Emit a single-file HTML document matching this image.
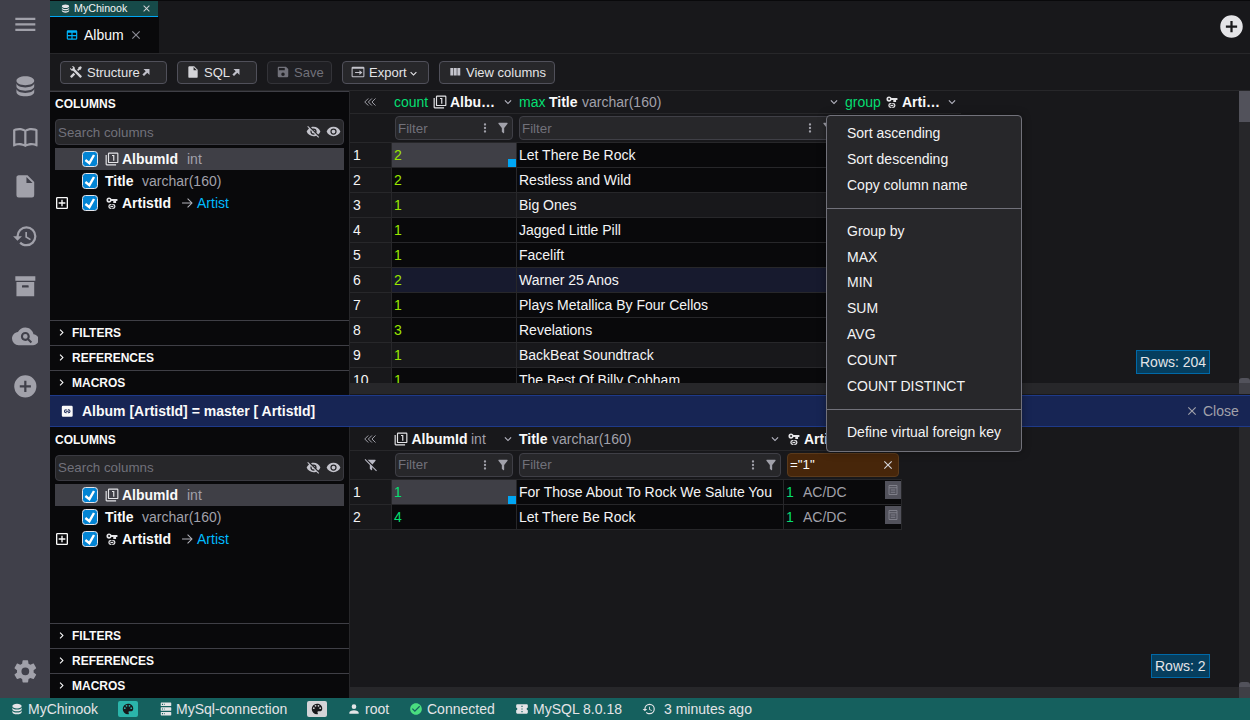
<!DOCTYPE html>
<html lang="en">
<head>
<meta charset="utf-8">
<title>DbGate - Album</title>
<style>
*{box-sizing:border-box;margin:0;padding:0}
html,body{width:1250px;height:720px;overflow:hidden;background:#18181b}
body{position:relative;font-family:"Liberation Sans",Arial,sans-serif;font-size:14px;color:#e4e4e7;line-height:1}
.abs,.ico{position:absolute}
svg{display:block}
.ico{fill:currentColor}
i{display:block;font-style:normal}
#sidebar{left:0;top:0;width:50px;height:698px;background:#40404a;color:#a1a1aa}
#status{left:0;top:698px;width:1250px;height:22px;background:#15605e;color:#e4e4e7;font-size:14px}
#status .t{position:absolute;top:4px;white-space:nowrap}
#tabs{left:50px;top:0;width:1200px;height:53px;background:#18181b;border-top:1px solid #09090b}
#dbtab{left:50px;top:1px;width:108px;height:16px;background:#164a49;border-bottom:1px solid #00a6f4;font-size:10.67px;color:#f4f4f5}
#filetab{left:50px;top:17px;width:109px;height:36px;background:#09090b}
#toolbar{left:50px;top:53px;width:1200px;height:38px;background:#18181b;border-top:1px solid #27272a;border-bottom:1px solid #27272a}
.btn{position:absolute;top:61px;height:23px;background:#27272a;border:1px solid #50505a;border-radius:4px;font-size:13px;color:#e4e4e7;white-space:nowrap}
.btn .t{position:absolute;top:4px}
.btn.dis{color:#71717a;background:#1f1f23;border-color:#333338}
.lp{left:50px;width:299px;background:#09090b}
.lpb{left:349px;width:1px;background:#27272a}
.ttl{position:absolute;left:5px;font-weight:bold;font-size:12px;color:#fafafa}
.search{position:absolute;left:5px;width:289px;height:26px;background:#27272a;border:1px solid #3a3a41;border-radius:4px;font-size:13.333px;color:#71717a}
.search .t{position:absolute;left:2px;top:6px}
.colrow{position:absolute;left:5px;width:289px;height:22px;font-size:14px;white-space:nowrap}
.colrow.sel{background:#3f3f46}
.colrow b,.colrow span{position:absolute;top:4px}
.colrow b{color:#fafafa}
.colrow .ty{color:#a1a1aa}
.colrow .cb{left:27px;top:3px;width:16px;height:16px;border-radius:3.5px;background:#0284d4;border:1px solid #e4e4ea}
.acc{position:absolute;left:50px;width:299px;height:25px;background:#09090b;border-top:1px solid #3f3f46;font-weight:bold;font-size:12px;color:#fafafa}
.acc .t{position:absolute;left:22px;top:6px}
.grid{position:absolute;font-size:14px}
.cell{position:absolute;height:25px;border-right:1px solid #27272a;border-bottom:1px solid #27272a;white-space:nowrap;overflow:hidden;color:#f4f4f5}
.cell .t{position:absolute;left:3px;top:5px}
.hdr{background:#18181b}
.num{color:#9ae600}
.grn{color:#05df72}
.finput{position:absolute;height:24px;background:#27272a;border:1px solid #3f3f46;border-radius:4px;font-size:13.333px;color:#71717a}
.finput .t{position:absolute;left:2px;top:5px}
#menu{left:826px;top:115px;width:196px;height:337px;background:#27272a;border:1px solid #71717a;border-radius:4px;box-shadow:0 0 8px rgba(0,0,0,.35);font-size:14px;color:#f4f4f5}
#menu .mi{position:absolute;left:20px;white-space:nowrap}
#menu .dv{position:absolute;left:0;width:194px;height:1px;background:#71717a}
.badge{position:absolute;height:24px;background:#063e5e;border:1px solid #0069a8;color:#e4e4e7}
.badge span{position:absolute;left:3px;top:4px;white-space:nowrap}
</style>
</head>
<body>
<div id="sidebar" class="abs">
<svg class="ico" style="left:11.67px;top:10.67px;width:26.67px;height:26.67px;color:#a1a1aa" viewBox="0 0 24 24"><path d="M3,6H21V8H3V6M3,11H21V13H3V11M3,16H21V18H3V16Z"/></svg>
<svg class="ico" style="left:11.67px;top:72.67px;width:26.67px;height:26.67px;color:#a1a1aa" viewBox="0 0 24 24"><path d="M12,3C7.58,3 4,4.79 4,7C4,9.21 7.58,11 12,11C16.42,11 20,9.21 20,7C20,4.79 16.42,3 12,3M4,9V12C4,14.21 7.58,16 12,16C16.42,16 20,14.21 20,12V9C20,11.21 16.42,13 12,13C7.58,13 4,11.21 4,9M4,14V17C4,19.21 7.58,21 12,21C16.42,21 20,19.21 20,17V14C20,16.21 16.42,18 12,18C7.58,18 4,16.21 4,14Z"/></svg>
<svg class="ico" style="left:11.67px;top:122.67px;width:26.67px;height:26.67px;color:#a1a1aa" viewBox="0 0 24 24"><path d="M12,21.5C10.65,20.65 8.2,20 6.5,20C4.85,20 3.15,20.3 1.75,21.05C1.65,21.1 1.6,21.1 1.5,21.1C1.25,21.1 1,20.85 1,20.6V6C1.6,5.55 2.25,5.25 3,5C4.11,4.65 5.33,4.5 6.5,4.5C8.45,4.5 10.55,4.9 12,6C13.45,4.9 15.55,4.5 17.5,4.5C18.67,4.5 19.89,4.65 21,5C21.75,5.25 22.4,5.55 23,6V20.6C23,20.85 22.75,21.1 22.5,21.1C22.4,21.1 22.35,21.1 22.25,21.05C20.85,20.3 19.15,20 17.5,20C15.8,20 13.35,20.65 12,21.5M11,7.5C9.64,6.9 7.84,6.5 6.5,6.5C5.3,6.5 4.1,6.65 3,7V18.5C4.1,18.15 5.3,18 6.5,18C7.84,18 9.64,18.4 11,19V7.5M13,19C14.36,18.4 16.16,18 17.5,18C18.7,18 19.9,18.15 21,18.5V7C19.9,6.65 18.7,6.5 17.5,6.5C16.16,6.5 14.36,6.9 13,7.5V19Z"/></svg>
<svg class="ico" style="left:11.67px;top:172.67px;width:26.67px;height:26.67px;color:#a1a1aa" viewBox="0 0 24 24"><path d="M13,9V3.5L18.5,9M6,2C4.89,2 4,2.89 4,4V20A2,2 0 0,0 6,22H18A2,2 0 0,0 20,20V8L14,2H6Z"/></svg>
<svg class="ico" style="left:11.67px;top:222.67px;width:26.67px;height:26.67px;color:#a1a1aa" viewBox="0 0 24 24"><path d="M13.5,8H12V13L16.28,15.54L17,14.33L13.5,12.25V8M13,3A9,9 0 0,0 4,12H1L4.96,16.03L9,12H6A7,7 0 0,1 13,5A7,7 0 0,1 20,12A7,7 0 0,1 13,19C11.07,19 9.32,18.21 8.06,16.94L6.64,18.36C8.27,20 10.5,21 13,21A9,9 0 0,0 22,12A9,9 0 0,0 13,3"/></svg>
<svg class="ico" style="left:11.67px;top:272.67px;width:26.67px;height:26.67px;color:#a1a1aa" viewBox="0 0 24 24"><path d="M3,3H21V7H3V3M4,8H20V21H4V8M9.5,11A0.5,0.5 0 0,0 9,11.5V13H15V11.5A0.5,0.5 0 0,0 14.5,11H9.5Z"/></svg>
<svg class="ico" style="left:11.67px;top:322.67px;width:26.67px;height:26.67px;color:#a1a1aa" viewBox="0 0 24 24"><path fill-rule="evenodd" d="M19.35,10.04C18.67,6.59 15.64,4 12,4C9.11,4 6.6,5.64 5.35,8.04C2.34,8.36 0,10.91 0,14A6,6 0 0,0 6,20H19A5,5 0 0,0 24,15C24,12.36 21.95,10.22 19.35,10.04M16.8,18.2L14.1,15.5C13.5,15.9 12.8,16.1 12,16.1C9.8,16.1 8,14.3 8,12.1C8,9.9 9.8,8.1 12,8.1C14.2,8.1 16,9.9 16,12.1C16,12.9 15.8,13.6 15.4,14.2L18.1,16.9L16.8,18.2M12,10A2.1,2.1 0 0,0 9.9,12.1A2.1,2.1 0 0,0 12,14.2A2.1,2.1 0 0,0 14.1,12.1A2.1,2.1 0 0,0 12,10Z"/></svg>
<svg class="ico" style="left:11.67px;top:372.67px;width:26.67px;height:26.67px;color:#a1a1aa" viewBox="0 0 24 24"><path d="M17,13H13V17H11V13H7V11H11V7H13V11H17M12,2A10,10 0 0,0 2,12A10,10 0 0,0 12,22A10,10 0 0,0 22,12A10,10 0 0,0 12,2Z"/></svg>
<svg class="ico" style="left:11.67px;top:658.2px;width:26.67px;height:26.67px;color:#a1a1aa" viewBox="0 0 24 24"><path d="M12,15.5A3.5,3.5 0 0,1 8.5,12A3.5,3.5 0 0,1 12,8.5A3.5,3.5 0 0,1 15.5,12A3.5,3.5 0 0,1 12,15.5M19.43,12.97C19.47,12.65 19.5,12.33 19.5,12C19.5,11.67 19.47,11.34 19.43,11L21.54,9.37C21.73,9.22 21.78,8.95 21.66,8.73L19.66,5.27C19.54,5.05 19.27,4.96 19.05,5.05L16.56,6.05C16.04,5.66 15.5,5.32 14.87,5.07L14.5,2.42C14.46,2.18 14.25,2 14,2H10C9.75,2 9.54,2.18 9.5,2.42L9.13,5.07C8.5,5.32 7.96,5.66 7.44,6.05L4.95,5.05C4.73,4.96 4.46,5.05 4.34,5.27L2.34,8.73C2.21,8.95 2.27,9.22 2.46,9.37L4.57,11C4.53,11.34 4.5,11.67 4.5,12C4.5,12.33 4.53,12.65 4.57,12.97L2.46,14.63C2.27,14.78 2.21,15.05 2.34,15.27L4.34,18.73C4.46,18.95 4.73,19.03 4.95,18.95L7.44,17.94C7.96,18.34 8.5,18.68 9.13,18.93L9.5,21.58C9.54,21.82 9.75,22 10,22H14C14.25,22 14.46,21.82 14.5,21.58L14.87,18.93C15.5,18.67 16.04,18.34 16.56,17.94L19.05,18.95C19.27,19.03 19.54,18.95 19.66,18.73L21.66,15.27C21.78,15.05 21.73,14.78 21.54,14.63L19.43,12.97Z"/></svg>
</div>
<div id="tabs" class="abs"></div>
<div id="dbtab" class="abs"><svg class="ico" style="left:10px;top:2px;width:11px;height:11px;color:#e4e4e7" viewBox="0 0 24 24"><path d="M12,3C7.58,3 4,4.79 4,7C4,9.21 7.58,11 12,11C16.42,11 20,9.21 20,7C20,4.79 16.42,3 12,3M4,9V12C4,14.21 7.58,16 12,16C16.42,16 20,14.21 20,12V9C20,11.21 16.42,13 12,13C7.58,13 4,11.21 4,9M4,14V17C4,19.21 7.58,21 12,21C16.42,21 20,19.21 20,17V14C20,16.21 16.42,18 12,18C7.58,18 4,16.21 4,14Z"/></svg><span class="abs" style="left:24px;top:2px">MyChinook</span><svg class="ico" style="left:91px;top:2px;width:11px;height:11px;color:#d4d4d8" viewBox="0 0 24 24"><path d="M19,6.41L17.59,5L12,10.59L6.41,5L5,6.41L10.59,12L5,17.59L6.41,19L12,13.41L17.59,19L19,17.59L13.41,12L19,6.41Z"/></svg></div>
<div id="filetab" class="abs"><svg class="ico" style="left:15px;top:10.6px;width:14px;height:14px;color:#00b4fa" viewBox="0 0 24 24"><path d="M5,4H19A2,2 0 0,1 21,6V18A2,2 0 0,1 19,20H5A2,2 0 0,1 3,18V6A2,2 0 0,1 5,4M5,8V12H11V8H5M13,8V12H19V8H13M5,14V18H11V14H5M13,14V18H19V14H13Z"/></svg><span class="abs" style="left:34px;top:11px;color:#fafafa">Album</span><svg class="ico" style="left:79px;top:11px;width:14px;height:14px;color:#8a8a94" viewBox="0 0 24 24"><path d="M19,6.41L17.59,5L12,10.59L6.41,5L5,6.41L10.59,12L5,17.59L6.41,19L12,13.41L17.59,19L19,17.59L13.41,12L19,6.41Z"/></svg></div>
<svg class="ico" style="left:1218px;top:12.5px;width:27px;height:27px;color:#e4e4e7" viewBox="0 0 24 24"><path d="M17,13H13V17H11V13H7V11H11V7H13V11H17M12,2A10,10 0 0,0 2,12A10,10 0 0,0 12,22A10,10 0 0,0 22,12A10,10 0 0,0 12,2Z"/></svg>
<div id="toolbar" class="abs"></div>
<div class="btn" style="left:60px;width:107px"><svg class="ico" style="left:7.5px;top:3.4px;width:14px;height:14px;color:#d4d4d8" viewBox="0 0 24 24"><path d="M21.71,20.29L20.29,21.71A1,1 0 0,1 18.88,21.71L7,9.85A3.81,3.81 0 0,1 6,10A4,4 0 0,1 2.22,4.7L4.76,7.24L5.29,6.71L6.71,5.29L7.24,4.76L4.7,2.22A4,4 0 0,1 10,6A3.81,3.81 0 0,1 9.85,7L21.71,18.88A1,1 0 0,1 21.71,20.29M2.29,18.88A1,1 0 0,0 2.29,20.29L3.71,21.71A1,1 0 0,0 5.12,21.71L10.59,16.25L7.76,13.42M20,2L16,4V6L13.83,8.17L15.83,10.17L18,8H20L22,4L20,2Z"/></svg><span class="t" style="left:26px">Structure</span><svg class="ico" style="left:79px;top:3.9px;width:12px;height:12px;color:#c0c0ca" viewBox="0 0 24 24"><path d="M7,6H19V18L14.6,13.6L8,20.2L4.8,17L11.4,10.4L7,6Z"/></svg></div>
<div class="btn" style="left:177px;width:80px"><svg class="ico" style="left:8px;top:3.4px;width:14px;height:14px;color:#d4d4d8" viewBox="0 0 24 24"><path d="M13,9V3.5L18.5,9M6,2C4.89,2 4,2.89 4,4V20A2,2 0 0,0 6,22H18A2,2 0 0,0 20,20V8L14,2H6Z"/></svg><span class="t" style="left:26px">SQL</span><svg class="ico" style="left:52.3px;top:3.9px;width:12px;height:12px;color:#c0c0ca" viewBox="0 0 24 24"><path d="M7,6H19V18L14.6,13.6L8,20.2L4.8,17L11.4,10.4L7,6Z"/></svg></div>
<div class="btn dis" style="left:267px;width:65px"><svg class="ico" style="left:8px;top:3.2px;width:14px;height:14px;color:#71717a" viewBox="0 0 24 24"><path d="M15,9H5V5H15M12,19A3,3 0 0,1 9,16A3,3 0 0,1 12,13A3,3 0 0,1 15,16A3,3 0 0,1 12,19M17,3H5C3.89,3 3,3.9 3,5V19A2,2 0 0,0 5,21H19A2,2 0 0,0 21,19V7L17,3Z"/></svg><span class="t" style="left:26px">Save</span></div>
<div class="btn" style="left:342px;width:87px"><svg class="ico" style="left:8px;top:3.2px;width:14px;height:14px;color:#c4c4cc" viewBox="0 0 24 24"><path fill-rule="evenodd" d="M3,3H21A2,2 0 0,1 23,5V19A2,2 0 0,1 21,21H3A2,2 0 0,1 1,19V5A2,2 0 0,1 3,3M2.8,6.5V19.2H21.2V6.5H2.8M14.5,9L19.5,13L14.5,17V13.9H7V12.1H14.5V9Z"/></svg><span class="t" style="left:26px">Export</span><svg class="ico" style="left:63.5px;top:4.5px;width:13px;height:13px;color:#e4e4e7" viewBox="0 0 24 24"><path d="M7.41,8.58L12,13.17L16.59,8.58L18,10L12,16L6,10L7.41,8.58Z"/></svg></div>
<div class="btn" style="left:439px;width:116px"><svg class="ico" style="left:8px;top:2.8px;width:14px;height:14px;color:#c4c4cc" viewBox="0 0 24 24"><path d="M16,5V18H21V5M4,18H9V5H4M10,18H15V5H10V18Z"/></svg><span class="t" style="left:26px">View columns</span></div>
<div class="abs lp" style="top:92px;height:228px"></div>
<div class="abs" style="left:50px;top:98px;width:299px;height:120px">
<span class="ttl" style="top:0">COLUMNS</span>
<div class="search" style="top:21px"><span class="t" style="top:6px">Search columns</span><svg class="ico" style="left:249.5px;top:4.3px;width:15px;height:15px;color:#c4c4cc" viewBox="0 0 24 24"><path d="M11.83,9L15,12.16C15,12.11 15,12.05 15,12A3,3 0 0,0 12,9C11.94,9 11.89,9 11.83,9M7.53,9.8L9.08,11.35C9.03,11.56 9,11.77 9,12A3,3 0 0,0 12,15C12.22,15 12.44,14.97 12.65,14.92L14.2,16.47C13.53,16.8 12.79,17 12,17A5,5 0 0,1 7,12C7,11.21 7.2,10.47 7.53,9.8M2,4.27L4.28,6.55L4.73,7C3.08,8.3 1.78,10 1,12C2.73,16.39 7,19.5 12,19.5C13.55,19.5 15.03,19.2 16.38,18.66L16.81,19.08L19.73,22L21,20.73L3.27,3M12,7A5,5 0 0,1 17,12C17,12.64 16.87,13.26 16.64,13.82L19.57,16.75C21.07,15.5 22.27,13.86 23,12C21.27,7.61 17,4.5 12,4.5C10.6,4.5 9.26,4.75 8,5.2L10.17,7.35C10.74,7.13 11.35,7 12,7Z"/></svg><svg class="ico" style="left:270px;top:4.3px;width:15px;height:15px;color:#c4c4cc" viewBox="0 0 24 24"><path d="M12,9A3,3 0 0,0 9,12A3,3 0 0,0 12,15A3,3 0 0,0 15,12A3,3 0 0,0 12,9M12,17A5,5 0 0,1 7,12A5,5 0 0,1 12,7A5,5 0 0,1 17,12A5,5 0 0,1 12,17M12,4.5C7,4.5 2.73,7.61 1,12C2.73,16.39 7,19.5 12,19.5C17,19.5 21.27,16.39 23,12C21.27,7.61 17,4.5 12,4.5Z"/></svg></div>
<div class="colrow sel" style="top:50px"><i class="abs cb"><svg viewBox="0 0 16 16" style="position:absolute;left:-1px;top:-1px;width:16px;height:16px"><path d="M3.4,9L7.4,12.2L12,4" fill="none" stroke="#fff" stroke-width="2.4"/></svg></i><svg class="ico" style="left:49.5px;top:3.6px;width:14px;height:14px;color:#e4e4e7" viewBox="0 0 24 24"><path d="M3,5V21H19V23H3A2,2 0 0,1 1,21V5H3M14,15H16V5H12V7H14V15M21,1A2,2 0 0,1 23,3V17A2,2 0 0,1 21,19H7A2,2 0 0,1 5,17V3A2,2 0 0,1 7,1H21M21,3H7V17H21V3Z"/></svg><b style="left:67px">AlbumId</b><span class="ty" style="left:132px">int</span></div>
<div class="colrow" style="top:72px"><i class="abs cb"><svg viewBox="0 0 16 16" style="position:absolute;left:-1px;top:-1px;width:16px;height:16px"><path d="M3.4,9L7.4,12.2L12,4" fill="none" stroke="#fff" stroke-width="2.4"/></svg></i><b style="left:50px">Title</b><span class="ty" style="left:87px">varchar(160)</span></div>
<div class="colrow" style="top:94px"><svg class="ico" style="left:1px;top:5px;width:12px;height:12px;color:#fafafa" viewBox="3 3 18 18"><path d="M19,19V5H5V19H19M19,3A2,2 0 0,1 21,5V19A2,2 0 0,1 19,21H5A2,2 0 0,1 3,19V5C3,3.89 3.9,3 5,3H19M11,7H13V11H17V13H13V17H11V13H7V11H11V7Z"/></svg><i class="abs cb"><svg viewBox="0 0 16 16" style="position:absolute;left:-1px;top:-1px;width:16px;height:16px"><path d="M3.4,9L7.4,12.2L12,4" fill="none" stroke="#fff" stroke-width="2.4"/></svg></i><svg class="ico" style="left:49.5px;top:4px;width:14px;height:14px;color:#e4e4e7" viewBox="0 0 24 24"><path fill-rule="evenodd" d="M7,2.5A4.5,4.5 0 0,1 11.2,5.3H21.3V8.7H19V12H14.2V8.7H11.2A4.5,4.5 0 0,1 7,11.5A4.5,4.5 0 0,1 2.5,7A4.5,4.5 0 0,1 7,2.5M7,5.3A1.7,1.7 0 0,0 5.3,7A1.7,1.7 0 0,0 7,8.7A1.7,1.7 0 0,0 8.7,7A1.7,1.7 0 0,0 7,5.3Z"/><path d="M9.8,13.8H11.1V16H9.8A2,2 0 0,0 9.8,20H11.1V22.2H9.8A4.2,4.2 0 0,1 9.8,13.8M12.5,13.8H13.8A4.2,4.2 0 0,1 13.8,22.2H12.5V20H13.8A2,2 0 0,0 13.8,16H12.5V13.8M9.3,17H14.3V19H9.3V17Z"/></svg><b style="left:67px">ArtistId</b><svg class="ico" style="left:125px;top:4px;width:14px;height:14px;color:#b4b4bc" viewBox="0 0 24 24"><path d="M3.5,12H20M13,4.5L20.5,12L13,19.5" fill="none" stroke="currentColor" stroke-width="1.8"/></svg><span style="left:142px;color:#00bcff">Artist</span></div>
</div>
<div class="acc" style="top:320px"><svg class="ico" style="left:5px;top:5px;width:13px;height:13px;color:#fafafa" viewBox="0 0 24 24"><path d="M8.59,16.58L13.17,12L8.59,7.41L10,6L16,12L10,18L8.59,16.58Z"/></svg><span class="t">FILTERS</span></div>
<div class="acc" style="top:345px"><svg class="ico" style="left:5px;top:5px;width:13px;height:13px;color:#fafafa" viewBox="0 0 24 24"><path d="M8.59,16.58L13.17,12L8.59,7.41L10,6L16,12L10,18L8.59,16.58Z"/></svg><span class="t">REFERENCES</span></div>
<div class="acc" style="top:370px"><svg class="ico" style="left:5px;top:5px;width:13px;height:13px;color:#fafafa" viewBox="0 0 24 24"><path d="M8.59,16.58L13.17,12L8.59,7.41L10,6L16,12L10,18L8.59,16.58Z"/></svg><span class="t">MACROS</span></div>
<div class="abs" style="left:50px;top:91px;width:299px;height:1px;background:#3f3f46"></div>
<div class="abs lpb" style="top:91px;height:304px"></div>
<div class="grid" style="left:350px;top:91px;width:889px;height:292px;background:#18181b;overflow:hidden">
<div class="abs hdr" style="left:0;top:0;width:611px;height:23px;border-bottom:1px solid #27272a"></div>
<svg class="ico" style="left:13px;top:4px;width:14px;height:14px;color:#a1a1aa" viewBox="0 0 24 24"><path d="M9,6L3,12L9,18M15.2,6L9.2,12L15.2,18M21.4,6L15.4,12L21.4,18" fill="none" stroke="currentColor" stroke-width="1.7"/></svg>
<span class="abs grn" style="left:44px;top:4px">count</span><svg class="ico" style="left:83px;top:4px;width:14px;height:14px;color:#e4e4e7" viewBox="0 0 24 24"><path d="M3,5V21H19V23H3A2,2 0 0,1 1,21V5H3M14,15H16V5H12V7H14V15M21,1A2,2 0 0,1 23,3V17A2,2 0 0,1 21,19H7A2,2 0 0,1 5,17V3A2,2 0 0,1 7,1H21M21,3H7V17H21V3Z"/></svg><b class="abs" style="left:100px;top:4px;color:#fafafa">Albu…</b><svg class="ico" style="left:151px;top:4px;width:14px;height:14px;color:#b4b4c0" viewBox="0 0 24 24"><path d="M7.41,8.58L12,13.17L16.59,8.58L18,10L12,16L6,10L7.41,8.58Z"/></svg>
<span class="abs grn" style="left:169px;top:4px">max</span><b class="abs" style="left:199px;top:4px;color:#fafafa">Title</b><span class="abs" style="left:232px;top:4px;color:#a1a1aa">varchar(160)</span><svg class="ico" style="left:476.5px;top:4px;width:14px;height:14px;color:#b4b4c0" viewBox="0 0 24 24"><path d="M7.41,8.58L12,13.17L16.59,8.58L18,10L12,16L6,10L7.41,8.58Z"/></svg>
<span class="abs grn" style="left:495px;top:4px">group</span><svg class="ico" style="left:535px;top:4px;width:14px;height:14px;color:#e4e4e7" viewBox="0 0 24 24"><path fill-rule="evenodd" d="M7,2.5A4.5,4.5 0 0,1 11.2,5.3H21.3V8.7H19V12H14.2V8.7H11.2A4.5,4.5 0 0,1 7,11.5A4.5,4.5 0 0,1 2.5,7A4.5,4.5 0 0,1 7,2.5M7,5.3A1.7,1.7 0 0,0 5.3,7A1.7,1.7 0 0,0 7,8.7A1.7,1.7 0 0,0 8.7,7A1.7,1.7 0 0,0 7,5.3Z"/><path d="M9.8,13.8H11.1V16H9.8A2,2 0 0,0 9.8,20H11.1V22.2H9.8A4.2,4.2 0 0,1 9.8,13.8M12.5,13.8H13.8A4.2,4.2 0 0,1 13.8,22.2H12.5V20H13.8A2,2 0 0,0 13.8,16H12.5V13.8M9.3,17H14.3V19H9.3V17Z"/></svg><b class="abs" style="left:552px;top:4px;color:#fafafa">Arti…</b><svg class="ico" style="left:595px;top:4px;width:14px;height:14px;color:#b4b4c0" viewBox="0 0 24 24"><path d="M7.41,8.58L12,13.17L16.59,8.58L18,10L12,16L6,10L7.41,8.58Z"/></svg>
<div class="abs hdr" style="left:0;top:23px;width:611px;height:29px;border-bottom:1px solid #27272a"></div>
<div class="finput" style="left:45px;top:25px;width:118px"><span class="t" style="top:5px">Filter</span><svg class="ico" style="left:82px;top:4px;width:14px;height:14px;color:#a1a1aa" viewBox="0 0 24 24"><path d="M12,16A2,2 0 0,1 14,18A2,2 0 0,1 12,20A2,2 0 0,1 10,18A2,2 0 0,1 12,16M12,10A2,2 0 0,1 14,12A2,2 0 0,1 12,14A2,2 0 0,1 10,12A2,2 0 0,1 12,10M12,4A2,2 0 0,1 14,6A2,2 0 0,1 12,8A2,2 0 0,1 10,6A2,2 0 0,1 12,4Z"/></svg><svg class="ico" style="left:99.5px;top:4px;width:14px;height:14px;color:#a1a1aa" viewBox="0 0 24 24"><path d="M14,12V19.88C14.04,20.18 13.94,20.5 13.71,20.71C13.32,21.1 12.69,21.1 12.3,20.71L10.29,18.7C10.06,18.47 9.96,18.16 10,17.87V12H9.97L4.21,4.62C3.87,4.19 3.95,3.56 4.38,3.22C4.57,3.08 4.78,3 5,3V3H19V3C19.22,3 19.43,3.08 19.62,3.22C20.05,3.56 20.13,4.19 19.79,4.62L14.03,12H14Z"/></svg></div>
<div class="finput" style="left:169px;top:25px;width:319px"><span class="t" style="top:5px">Filter</span><svg class="ico" style="left:283px;top:4px;width:14px;height:14px;color:#a1a1aa" viewBox="0 0 24 24"><path d="M12,16A2,2 0 0,1 14,18A2,2 0 0,1 12,20A2,2 0 0,1 10,18A2,2 0 0,1 12,16M12,10A2,2 0 0,1 14,12A2,2 0 0,1 12,14A2,2 0 0,1 10,12A2,2 0 0,1 12,10M12,4A2,2 0 0,1 14,6A2,2 0 0,1 12,8A2,2 0 0,1 10,6A2,2 0 0,1 12,4Z"/></svg><svg class="ico" style="left:300.5px;top:4px;width:14px;height:14px;color:#a1a1aa" viewBox="0 0 24 24"><path d="M14,12V19.88C14.04,20.18 13.94,20.5 13.71,20.71C13.32,21.1 12.69,21.1 12.3,20.71L10.29,18.7C10.06,18.47 9.96,18.16 10,17.87V12H9.97L4.21,4.62C3.87,4.19 3.95,3.56 4.38,3.22C4.57,3.08 4.78,3 5,3V3H19V3C19.22,3 19.43,3.08 19.62,3.22C20.05,3.56 20.13,4.19 19.79,4.62L14.03,12H14Z"/></svg></div>
<div class="finput" style="left:495px;top:25px;width:112px"><span class="t" style="top:5px">Filter</span><svg class="ico" style="left:76px;top:4px;width:14px;height:14px;color:#a1a1aa" viewBox="0 0 24 24"><path d="M12,16A2,2 0 0,1 14,18A2,2 0 0,1 12,20A2,2 0 0,1 10,18A2,2 0 0,1 12,16M12,10A2,2 0 0,1 14,12A2,2 0 0,1 12,14A2,2 0 0,1 10,12A2,2 0 0,1 12,10M12,4A2,2 0 0,1 14,6A2,2 0 0,1 12,8A2,2 0 0,1 10,6A2,2 0 0,1 12,4Z"/></svg><svg class="ico" style="left:93.5px;top:4px;width:14px;height:14px;color:#a1a1aa" viewBox="0 0 24 24"><path d="M14,12V19.88C14.04,20.18 13.94,20.5 13.71,20.71C13.32,21.1 12.69,21.1 12.3,20.71L10.29,18.7C10.06,18.47 9.96,18.16 10,17.87V12H9.97L4.21,4.62C3.87,4.19 3.95,3.56 4.38,3.22C4.57,3.08 4.78,3 5,3V3H19V3C19.22,3 19.43,3.08 19.62,3.22C20.05,3.56 20.13,4.19 19.79,4.62L14.03,12H14Z"/></svg></div>
<div class="cell hdr" style="left:0;top:52px;width:42px"><span class="t">1</span></div>
<div class="cell" style="left:42px;top:52px;width:125px;background:#3f3f46"><span class="t num" style="left:2px">2</span><i class="abs" style="right:0;bottom:0;width:8px;height:8px;background:#00a6f4"></i></div>
<div class="cell" style="left:167px;top:52px;width:325px;background:#09090b"><span class="t" style="left:2px">Let There Be Rock</span></div>
<div class="cell" style="left:492px;top:52px;width:119px;background:#09090b"></div>
<div class="cell hdr" style="left:0;top:77px;width:42px"><span class="t">2</span></div>
<div class="cell" style="left:42px;top:77px;width:125px;background:#09090b"><span class="t num" style="left:2px">2</span></div>
<div class="cell" style="left:167px;top:77px;width:325px;background:#09090b"><span class="t" style="left:2px">Restless and Wild</span></div>
<div class="cell" style="left:492px;top:77px;width:119px;background:#09090b"></div>
<div class="cell hdr" style="left:0;top:102px;width:42px"><span class="t">3</span></div>
<div class="cell" style="left:42px;top:102px;width:125px;background:#18181b"><span class="t num" style="left:2px">1</span></div>
<div class="cell" style="left:167px;top:102px;width:325px;background:#18181b"><span class="t" style="left:2px">Big Ones</span></div>
<div class="cell" style="left:492px;top:102px;width:119px;background:#18181b"></div>
<div class="cell hdr" style="left:0;top:127px;width:42px"><span class="t">4</span></div>
<div class="cell" style="left:42px;top:127px;width:125px;background:#09090b"><span class="t num" style="left:2px">1</span></div>
<div class="cell" style="left:167px;top:127px;width:325px;background:#09090b"><span class="t" style="left:2px">Jagged Little Pill</span></div>
<div class="cell" style="left:492px;top:127px;width:119px;background:#09090b"></div>
<div class="cell hdr" style="left:0;top:152px;width:42px"><span class="t">5</span></div>
<div class="cell" style="left:42px;top:152px;width:125px;background:#09090b"><span class="t num" style="left:2px">1</span></div>
<div class="cell" style="left:167px;top:152px;width:325px;background:#09090b"><span class="t" style="left:2px">Facelift</span></div>
<div class="cell" style="left:492px;top:152px;width:119px;background:#09090b"></div>
<div class="cell hdr" style="left:0;top:177px;width:42px"><span class="t">6</span></div>
<div class="cell" style="left:42px;top:177px;width:125px;background:#171a2e"><span class="t num" style="left:2px">2</span></div>
<div class="cell" style="left:167px;top:177px;width:325px;background:#171a2e"><span class="t" style="left:2px">Warner 25 Anos</span></div>
<div class="cell" style="left:492px;top:177px;width:119px;background:#171a2e"></div>
<div class="cell hdr" style="left:0;top:202px;width:42px"><span class="t">7</span></div>
<div class="cell" style="left:42px;top:202px;width:125px;background:#09090b"><span class="t num" style="left:2px">1</span></div>
<div class="cell" style="left:167px;top:202px;width:325px;background:#09090b"><span class="t" style="left:2px">Plays Metallica By Four Cellos</span></div>
<div class="cell" style="left:492px;top:202px;width:119px;background:#09090b"></div>
<div class="cell hdr" style="left:0;top:227px;width:42px"><span class="t">8</span></div>
<div class="cell" style="left:42px;top:227px;width:125px;background:#09090b"><span class="t num" style="left:2px">3</span></div>
<div class="cell" style="left:167px;top:227px;width:325px;background:#09090b"><span class="t" style="left:2px">Revelations</span></div>
<div class="cell" style="left:492px;top:227px;width:119px;background:#09090b"></div>
<div class="cell hdr" style="left:0;top:252px;width:42px"><span class="t">9</span></div>
<div class="cell" style="left:42px;top:252px;width:125px;background:#18181b"><span class="t num" style="left:2px">1</span></div>
<div class="cell" style="left:167px;top:252px;width:325px;background:#18181b"><span class="t" style="left:2px">BackBeat Soundtrack</span></div>
<div class="cell" style="left:492px;top:252px;width:119px;background:#18181b"></div>
<div class="cell hdr" style="left:0;top:277px;width:42px"><span class="t">10</span></div>
<div class="cell" style="left:42px;top:277px;width:125px;background:#09090b"><span class="t num" style="left:2px">1</span></div>
<div class="cell" style="left:167px;top:277px;width:325px;background:#09090b"><span class="t" style="left:2px">The Best Of Billy Cobham</span></div>
<div class="cell" style="left:492px;top:277px;width:119px;background:#09090b"></div>
</div>
<div class="abs" style="left:350px;top:383px;width:889px;height:11px;background:#27272a"></div>
<div class="abs" style="left:1239px;top:91px;width:11px;height:303px;background:#27272a"></div>
<div class="abs" style="left:1239px;top:91px;width:11px;height:31px;background:#52525b"></div>
<div class="abs" style="left:1239px;top:378px;width:11px;height:5px;background:#52525b;border-radius:3px 3px 0 0"></div>
<div class="abs" style="left:1239px;top:383px;width:11px;height:11px;background:#3f3f46"></div>
<div class="badge" style="left:1136px;top:350px;width:74px"><span>Rows: 204</span></div>
<div class="abs" style="left:50px;top:395px;width:1200px;height:32px;background:#172554;border-top:1px solid #1e3a8a;border-bottom:1px solid #1e3a8a"><svg class="ico" style="left:10px;top:7.5px;width:14.5px;height:14.5px;color:#fafafa" viewBox="0 0 24 24"><path fill-rule="evenodd" d="M19,3A2,2 0 0,1 21,5V19A2,2 0 0,1 19,21H5A2,2 0 0,1 3,19V5A2,2 0 0,1 5,3H19M10,8.6A3.4,3.4 0 0,0 10,15.4H11V13.8H10A1.8,1.8 0 0,1 10,10.2H11V8.6H10M13,8.6V10.2H14A1.8,1.8 0 0,1 14,13.8H13V15.4H14A3.400,3.400 0 0,0 14,8.6H13M9.5,11.2V12.8H14.5V11.2H9.5Z"/></svg><b class="abs" style="left:32px;top:8px;color:#fafafa;white-space:nowrap">Album [ArtistId] = master [ ArtistId]</b><svg class="ico" style="left:1135px;top:8px;width:14px;height:14px;color:#a1a1aa" viewBox="0 0 24 24"><path d="M19,6.41L17.59,5L12,10.59L6.41,5L5,6.41L10.59,12L5,17.59L6.41,19L12,13.41L17.59,19L19,17.59L13.41,12L19,6.41Z"/></svg><span class="abs" style="left:1153px;top:8px;color:#a1a1aa">Close</span></div>
<div class="abs lp" style="top:427px;height:196px"></div>
<div class="abs" style="left:50px;top:434px;width:299px;height:120px">
<span class="ttl" style="top:0">COLUMNS</span>
<div class="search" style="top:21px"><span class="t" style="top:5px">Search columns</span><svg class="ico" style="left:249.5px;top:4.3px;width:15px;height:15px;color:#c4c4cc" viewBox="0 0 24 24"><path d="M11.83,9L15,12.16C15,12.11 15,12.05 15,12A3,3 0 0,0 12,9C11.94,9 11.89,9 11.83,9M7.53,9.8L9.08,11.35C9.03,11.56 9,11.77 9,12A3,3 0 0,0 12,15C12.22,15 12.44,14.97 12.65,14.92L14.2,16.47C13.53,16.8 12.79,17 12,17A5,5 0 0,1 7,12C7,11.21 7.2,10.47 7.53,9.8M2,4.27L4.28,6.55L4.73,7C3.08,8.3 1.78,10 1,12C2.73,16.39 7,19.5 12,19.5C13.55,19.5 15.03,19.2 16.38,18.66L16.81,19.08L19.73,22L21,20.73L3.27,3M12,7A5,5 0 0,1 17,12C17,12.64 16.87,13.26 16.64,13.82L19.57,16.75C21.07,15.5 22.27,13.86 23,12C21.27,7.61 17,4.5 12,4.5C10.6,4.5 9.26,4.75 8,5.2L10.17,7.35C10.74,7.13 11.35,7 12,7Z"/></svg><svg class="ico" style="left:270px;top:4.3px;width:15px;height:15px;color:#c4c4cc" viewBox="0 0 24 24"><path d="M12,9A3,3 0 0,0 9,12A3,3 0 0,0 12,15A3,3 0 0,0 15,12A3,3 0 0,0 12,9M12,17A5,5 0 0,1 7,12A5,5 0 0,1 12,7A5,5 0 0,1 17,12A5,5 0 0,1 12,17M12,4.5C7,4.5 2.73,7.61 1,12C2.73,16.39 7,19.5 12,19.5C17,19.5 21.27,16.39 23,12C21.27,7.61 17,4.5 12,4.5Z"/></svg></div>
<div class="colrow sel" style="top:50px"><i class="abs cb"><svg viewBox="0 0 16 16" style="position:absolute;left:-1px;top:-1px;width:16px;height:16px"><path d="M3.4,9L7.4,12.2L12,4" fill="none" stroke="#fff" stroke-width="2.4"/></svg></i><svg class="ico" style="left:49.5px;top:3.6px;width:14px;height:14px;color:#e4e4e7" viewBox="0 0 24 24"><path d="M3,5V21H19V23H3A2,2 0 0,1 1,21V5H3M14,15H16V5H12V7H14V15M21,1A2,2 0 0,1 23,3V17A2,2 0 0,1 21,19H7A2,2 0 0,1 5,17V3A2,2 0 0,1 7,1H21M21,3H7V17H21V3Z"/></svg><b style="left:67px">AlbumId</b><span class="ty" style="left:132px">int</span></div>
<div class="colrow" style="top:72px"><i class="abs cb"><svg viewBox="0 0 16 16" style="position:absolute;left:-1px;top:-1px;width:16px;height:16px"><path d="M3.4,9L7.4,12.2L12,4" fill="none" stroke="#fff" stroke-width="2.4"/></svg></i><b style="left:50px">Title</b><span class="ty" style="left:87px">varchar(160)</span></div>
<div class="colrow" style="top:94px"><svg class="ico" style="left:1px;top:5px;width:12px;height:12px;color:#fafafa" viewBox="3 3 18 18"><path d="M19,19V5H5V19H19M19,3A2,2 0 0,1 21,5V19A2,2 0 0,1 19,21H5A2,2 0 0,1 3,19V5C3,3.89 3.9,3 5,3H19M11,7H13V11H17V13H13V17H11V13H7V11H11V7Z"/></svg><i class="abs cb"><svg viewBox="0 0 16 16" style="position:absolute;left:-1px;top:-1px;width:16px;height:16px"><path d="M3.4,9L7.4,12.2L12,4" fill="none" stroke="#fff" stroke-width="2.4"/></svg></i><svg class="ico" style="left:49.5px;top:4px;width:14px;height:14px;color:#e4e4e7" viewBox="0 0 24 24"><path fill-rule="evenodd" d="M7,2.5A4.5,4.5 0 0,1 11.2,5.3H21.3V8.7H19V12H14.2V8.7H11.2A4.5,4.5 0 0,1 7,11.5A4.5,4.5 0 0,1 2.5,7A4.5,4.5 0 0,1 7,2.5M7,5.3A1.7,1.7 0 0,0 5.3,7A1.7,1.7 0 0,0 7,8.7A1.7,1.7 0 0,0 8.7,7A1.7,1.7 0 0,0 7,5.3Z"/><path d="M9.8,13.8H11.1V16H9.8A2,2 0 0,0 9.8,20H11.1V22.2H9.8A4.2,4.2 0 0,1 9.8,13.8M12.5,13.8H13.8A4.2,4.2 0 0,1 13.8,22.2H12.5V20H13.8A2,2 0 0,0 13.8,16H12.5V13.8M9.3,17H14.3V19H9.3V17Z"/></svg><b style="left:67px">ArtistId</b><svg class="ico" style="left:125px;top:4px;width:14px;height:14px;color:#b4b4bc" viewBox="0 0 24 24"><path d="M3.5,12H20M13,4.5L20.5,12L13,19.5" fill="none" stroke="currentColor" stroke-width="1.8"/></svg><span style="left:142px;color:#00bcff">Artist</span></div>
</div>
<div class="acc" style="top:623px"><svg class="ico" style="left:5px;top:5px;width:13px;height:13px;color:#fafafa" viewBox="0 0 24 24"><path d="M8.59,16.58L13.17,12L8.59,7.41L10,6L16,12L10,18L8.59,16.58Z"/></svg><span class="t">FILTERS</span></div>
<div class="acc" style="top:648px"><svg class="ico" style="left:5px;top:5px;width:13px;height:13px;color:#fafafa" viewBox="0 0 24 24"><path d="M8.59,16.58L13.17,12L8.59,7.41L10,6L16,12L10,18L8.59,16.58Z"/></svg><span class="t">REFERENCES</span></div>
<div class="acc" style="top:673px"><svg class="ico" style="left:5px;top:5px;width:13px;height:13px;color:#fafafa" viewBox="0 0 24 24"><path d="M8.59,16.58L13.17,12L8.59,7.41L10,6L16,12L10,18L8.59,16.58Z"/></svg><span class="t">MACROS</span></div>
<div class="abs lpb" style="top:427px;height:271px"></div>
<div class="grid" style="left:350px;top:427px;width:889px;height:260px;background:#18181b;overflow:hidden">
<div class="abs hdr" style="left:0;top:0;width:552px;height:24px;border-bottom:1px solid #27272a"></div>
<svg class="ico" style="left:13px;top:5px;width:14px;height:14px;color:#a1a1aa" viewBox="0 0 24 24"><path d="M9,6L3,12L9,18M15.2,6L9.2,12L15.2,18M21.4,6L15.4,12L21.4,18" fill="none" stroke="currentColor" stroke-width="1.7"/></svg>
<svg class="ico" style="left:44px;top:5px;width:14px;height:14px;color:#e4e4e7" viewBox="0 0 24 24"><path d="M3,5V21H19V23H3A2,2 0 0,1 1,21V5H3M14,15H16V5H12V7H14V15M21,1A2,2 0 0,1 23,3V17A2,2 0 0,1 21,19H7A2,2 0 0,1 5,17V3A2,2 0 0,1 7,1H21M21,3H7V17H21V3Z"/></svg><b class="abs" style="left:61.5px;top:5px;color:#fafafa">AlbumId</b><span class="abs" style="left:121px;top:5px;color:#a1a1aa">int</span><svg class="ico" style="left:151px;top:5px;width:14px;height:14px;color:#b4b4c0" viewBox="0 0 24 24"><path d="M7.41,8.58L12,13.17L16.59,8.58L18,10L12,16L6,10L7.41,8.58Z"/></svg>
<b class="abs" style="left:169px;top:5px;color:#fafafa">Title</b><span class="abs" style="left:202px;top:5px;color:#a1a1aa">varchar(160)</span><svg class="ico" style="left:418px;top:5px;width:14px;height:14px;color:#b4b4c0" viewBox="0 0 24 24"><path d="M7.41,8.58L12,13.17L16.59,8.58L18,10L12,16L6,10L7.41,8.58Z"/></svg>
<svg class="ico" style="left:437px;top:5px;width:14px;height:14px;color:#e4e4e7" viewBox="0 0 24 24"><path fill-rule="evenodd" d="M7,2.5A4.5,4.5 0 0,1 11.2,5.3H21.3V8.7H19V12H14.2V8.7H11.2A4.5,4.5 0 0,1 7,11.5A4.5,4.5 0 0,1 2.5,7A4.5,4.5 0 0,1 7,2.5M7,5.3A1.7,1.7 0 0,0 5.3,7A1.7,1.7 0 0,0 7,8.7A1.7,1.7 0 0,0 8.7,7A1.7,1.7 0 0,0 7,5.3Z"/><path d="M9.8,13.8H11.1V16H9.8A2,2 0 0,0 9.8,20H11.1V22.2H9.8A4.2,4.2 0 0,1 9.8,13.8M12.5,13.8H13.8A4.2,4.2 0 0,1 13.8,22.2H12.5V20H13.8A2,2 0 0,0 13.8,16H12.5V13.8M9.3,17H14.3V19H9.3V17Z"/></svg><b class="abs" style="left:454px;top:5px;color:#fafafa">ArtistId</b>
<div class="abs hdr" style="left:0;top:24px;width:552px;height:29px;border-bottom:1px solid #27272a"></div>
<svg class="ico" style="left:14px;top:30.5px;width:14px;height:14px;color:#b8b8c4" viewBox="0 0 24 24"><path d="M2.39,1.73L1.11,3L9.97,11.86V17.87C9.96,18.16 10.06,18.47 10.29,18.7L12.3,20.71C12.69,21.1 13.32,21.1 13.71,20.71C13.94,20.5 14.04,20.18 14,19.88V15.89L20.84,22.73L22.11,21.46L2.39,1.73M19.79,4.62C20.13,4.19 20.05,3.56 19.62,3.22C19.43,3.08 19.22,3 19,3H6.2L14.5,11.3L19.79,4.62Z"/></svg>
<div class="finput" style="left:45px;top:26px;width:118px"><span class="t" style="top:4px">Filter</span><svg class="ico" style="left:82px;top:4px;width:14px;height:14px;color:#a1a1aa" viewBox="0 0 24 24"><path d="M12,16A2,2 0 0,1 14,18A2,2 0 0,1 12,20A2,2 0 0,1 10,18A2,2 0 0,1 12,16M12,10A2,2 0 0,1 14,12A2,2 0 0,1 12,14A2,2 0 0,1 10,12A2,2 0 0,1 12,10M12,4A2,2 0 0,1 14,6A2,2 0 0,1 12,8A2,2 0 0,1 10,6A2,2 0 0,1 12,4Z"/></svg><svg class="ico" style="left:99.5px;top:4px;width:14px;height:14px;color:#a1a1aa" viewBox="0 0 24 24"><path d="M14,12V19.88C14.04,20.18 13.94,20.5 13.71,20.71C13.32,21.1 12.69,21.1 12.3,20.71L10.29,18.7C10.06,18.47 9.96,18.16 10,17.87V12H9.97L4.21,4.62C3.87,4.19 3.95,3.56 4.38,3.22C4.57,3.08 4.78,3 5,3V3H19V3C19.22,3 19.43,3.08 19.62,3.22C20.05,3.56 20.13,4.19 19.79,4.62L14.03,12H14Z"/></svg></div>
<div class="finput" style="left:169px;top:26px;width:262px"><span class="t" style="top:4px">Filter</span><svg class="ico" style="left:226px;top:4px;width:14px;height:14px;color:#a1a1aa" viewBox="0 0 24 24"><path d="M12,16A2,2 0 0,1 14,18A2,2 0 0,1 12,20A2,2 0 0,1 10,18A2,2 0 0,1 12,16M12,10A2,2 0 0,1 14,12A2,2 0 0,1 12,14A2,2 0 0,1 10,12A2,2 0 0,1 12,10M12,4A2,2 0 0,1 14,6A2,2 0 0,1 12,8A2,2 0 0,1 10,6A2,2 0 0,1 12,4Z"/></svg><svg class="ico" style="left:243.5px;top:4px;width:14px;height:14px;color:#a1a1aa" viewBox="0 0 24 24"><path d="M14,12V19.88C14.04,20.18 13.94,20.5 13.71,20.71C13.32,21.1 12.69,21.1 12.3,20.71L10.29,18.7C10.06,18.47 9.96,18.16 10,17.87V12H9.97L4.21,4.62C3.87,4.19 3.95,3.56 4.38,3.22C4.57,3.08 4.78,3 5,3V3H19V3C19.22,3 19.43,3.08 19.62,3.22C20.05,3.56 20.13,4.19 19.79,4.62L14.03,12H14Z"/></svg></div>
<div class="finput" style="left:437px;top:26px;width:112px;background:#47260a;border-color:#5a3a1c;color:#fafafa"><span class="t" style="top:4px">="1"</span><svg class="ico" style="left:93px;top:4px;width:14px;height:14px;color:#d4d4d8" viewBox="0 0 24 24"><path d="M19,6.41L17.59,5L12,10.59L6.41,5L5,6.41L10.59,12L5,17.59L6.41,19L12,13.41L17.59,19L19,17.59L13.41,12L19,6.41Z"/></svg></div>
<div class="cell hdr" style="left:0;top:53px;width:42px"><span class="t">1</span></div>
<div class="cell" style="left:42px;top:53px;width:125px;background:#3f3f46"><span class="t grn" style="left:2px">1</span><i class="abs" style="right:0;bottom:0;width:8px;height:8px;background:#00a6f4"></i></div>
<div class="cell" style="left:167px;top:53px;width:267px;background:#09090b"><span class="t" style="left:2px">For Those About To Rock We Salute You</span></div>
<div class="cell" style="left:434px;top:53px;width:118px;background:#09090b"><span class="t grn" style="left:2px">1</span><span class="t" style="left:19px;color:#a1a1aa">AC/DC</span><i class="abs" style="right:0;top:1px;width:16px;height:18px;background:#52525c"></i><svg class="ico" style="left:103px;top:4px;width:12px;height:12px;color:#85858f" viewBox="0 0 24 24"><path d="M4,3H20V21H4V3ZM4,7.5H20M7.5,12H16.5M7.5,16.5H16.5" fill="none" stroke="currentColor" stroke-width="1.8"/></svg></div>
<div class="cell hdr" style="left:0;top:78px;width:42px"><span class="t">2</span></div>
<div class="cell" style="left:42px;top:78px;width:125px;background:#09090b"><span class="t grn" style="left:2px">4</span></div>
<div class="cell" style="left:167px;top:78px;width:267px;background:#09090b"><span class="t" style="left:2px">Let There Be Rock</span></div>
<div class="cell" style="left:434px;top:78px;width:118px;background:#09090b"><span class="t grn" style="left:2px">1</span><span class="t" style="left:19px;color:#a1a1aa">AC/DC</span><i class="abs" style="right:0;top:1px;width:16px;height:18px;background:#52525c"></i><svg class="ico" style="left:103px;top:4px;width:12px;height:12px;color:#85858f" viewBox="0 0 24 24"><path d="M4,3H20V21H4V3ZM4,7.5H20M7.5,12H16.5M7.5,16.5H16.5" fill="none" stroke="currentColor" stroke-width="1.8"/></svg></div>
</div>
<div class="abs" style="left:350px;top:687px;width:889px;height:11px;background:#27272a"></div>
<div class="abs" style="left:1239px;top:427px;width:11px;height:271px;background:#27272a"></div>
<div class="abs" style="left:1239px;top:682px;width:11px;height:5px;background:#52525b;border-radius:3px 3px 0 0"></div>
<div class="abs" style="left:1239px;top:687px;width:11px;height:11px;background:#3f3f46"></div>
<div class="badge" style="left:1151px;top:654px;width:59px"><span>Rows: 2</span></div>
<div id="menu" class="abs">
<span class="mi" style="top:10px">Sort ascending</span>
<span class="mi" style="top:36px">Sort descending</span>
<span class="mi" style="top:62px">Copy column name</span>
<span class="mi" style="top:108px">Group by</span>
<span class="mi" style="top:134px">MAX</span>
<span class="mi" style="top:159px">MIN</span>
<span class="mi" style="top:185px">SUM</span>
<span class="mi" style="top:211px">AVG</span>
<span class="mi" style="top:237px">COUNT</span>
<span class="mi" style="top:263px">COUNT DISTINCT</span>
<span class="mi" style="top:309px">Define virtual foreign key</span>
<i class="dv" style="top:92px"></i><i class="dv" style="top:293px"></i></div>
<div id="status" class="abs">
<svg class="ico" style="left:10px;top:4px;width:14px;height:14px;color:#e4e4e7" viewBox="0 0 24 24"><path d="M12,3C7.58,3 4,4.79 4,7C4,9.21 7.58,11 12,11C16.42,11 20,9.21 20,7C20,4.79 16.42,3 12,3M4,9V12C4,14.21 7.58,16 12,16C16.42,16 20,14.21 20,12V9C20,11.21 16.42,13 12,13C7.58,13 4,11.21 4,9M4,14V17C4,19.21 7.58,21 12,21C16.42,21 20,19.21 20,17V14C20,16.21 16.42,18 12,18C7.58,18 4,16.21 4,14Z"/></svg><span class="t" style="left:28px">MyChinook</span>
<i class="abs" style="left:118px;top:3px;width:20px;height:16px;background:#2bb5ab;border-radius:2px"></i><svg class="ico" style="left:121px;top:4px;width:14px;height:14px;color:#18181b" viewBox="0 0 24 24"><path d="M17.5,12A1.5,1.5 0 0,1 16,10.5A1.5,1.5 0 0,1 17.5,9A1.5,1.5 0 0,1 19,10.5A1.5,1.5 0 0,1 17.5,12M14.5,8A1.5,1.5 0 0,1 13,6.5A1.5,1.5 0 0,1 14.5,5A1.5,1.5 0 0,1 16,6.5A1.5,1.5 0 0,1 14.5,8M9.5,8A1.5,1.5 0 0,1 8,6.5A1.5,1.5 0 0,1 9.5,5A1.5,1.5 0 0,1 11,6.5A1.5,1.5 0 0,1 9.5,8M6.5,12A1.5,1.5 0 0,1 5,10.5A1.5,1.5 0 0,1 6.5,9A1.5,1.5 0 0,1 8,10.5A1.5,1.5 0 0,1 6.5,12M12,3A9,9 0 0,0 3,12A9,9 0 0,0 12,21A1.5,1.5 0 0,0 13.5,19.5C13.5,19.11 13.35,18.76 13.11,18.5C12.88,18.23 12.73,17.88 12.73,17.5A1.5,1.5 0 0,1 14.23,16H16A5,5 0 0,0 21,11C21,6.58 16.97,3 12,3Z"/></svg>
<svg class="ico" style="left:159px;top:4px;width:14px;height:14px;color:#e4e4e7" viewBox="0 0 24 24"><path d="M4,1H20A1,1 0 0,1 21,2V6A1,1 0 0,1 20,7H4A1,1 0 0,1 3,6V2A1,1 0 0,1 4,1M4,9H20A1,1 0 0,1 21,10V14A1,1 0 0,1 20,15H4A1,1 0 0,1 3,14V10A1,1 0 0,1 4,9M4,17H20A1,1 0 0,1 21,18V22A1,1 0 0,1 20,23H4A1,1 0 0,1 3,22V18A1,1 0 0,1 4,17M9,5H10V3H9V5M9,13H10V11H9V13M9,21H10V19H9V21M5,3V5H7V3H5M5,11V13H7V11H5M5,19V21H7V19H5Z"/></svg><span class="t" style="left:176px">MySql-connection</span>
<i class="abs" style="left:307px;top:3px;width:20px;height:16px;background:#d4d4d8;border-radius:2px"></i><svg class="ico" style="left:310px;top:4px;width:14px;height:14px;color:#18181b" viewBox="0 0 24 24"><path d="M17.5,12A1.5,1.5 0 0,1 16,10.5A1.5,1.5 0 0,1 17.5,9A1.5,1.5 0 0,1 19,10.5A1.5,1.5 0 0,1 17.5,12M14.5,8A1.5,1.5 0 0,1 13,6.5A1.5,1.5 0 0,1 14.5,5A1.5,1.5 0 0,1 16,6.5A1.5,1.5 0 0,1 14.5,8M9.5,8A1.5,1.5 0 0,1 8,6.5A1.5,1.5 0 0,1 9.5,5A1.5,1.5 0 0,1 11,6.5A1.5,1.5 0 0,1 9.5,8M6.5,12A1.5,1.5 0 0,1 5,10.5A1.5,1.5 0 0,1 6.5,9A1.5,1.5 0 0,1 8,10.5A1.5,1.5 0 0,1 6.5,12M12,3A9,9 0 0,0 3,12A9,9 0 0,0 12,21A1.5,1.5 0 0,0 13.5,19.5C13.5,19.11 13.35,18.76 13.11,18.5C12.88,18.23 12.73,17.88 12.73,17.5A1.5,1.5 0 0,1 14.23,16H16A5,5 0 0,0 21,11C21,6.58 16.97,3 12,3Z"/></svg>
<svg class="ico" style="left:347px;top:4px;width:14px;height:14px;color:#e4e4e7" viewBox="0 0 24 24"><path d="M12,4A4,4 0 0,1 16,8A4,4 0 0,1 12,12A4,4 0 0,1 8,8A4,4 0 0,1 12,4M12,14C16.42,14 20,15.79 20,18V20H4V18C4,15.79 7.58,14 12,14Z"/></svg><span class="t" style="left:365px">root</span>
<svg class="ico" style="left:409px;top:4px;width:14px;height:14px;color:#4ade80" viewBox="0 0 24 24"><path d="M12 2C6.5 2 2 6.5 2 12S6.5 22 12 22 22 17.5 22 12 17.5 2 12 2M10 17L5 12L6.41 10.59L10 14.17L17.59 6.58L19 8L10 17Z"/></svg><span class="t" style="left:427px">Connected</span>
<svg class="ico" style="left:515px;top:4px;width:14px;height:14px;color:#e4e4e7" viewBox="0 0 24 24"><path fill-rule="evenodd" d="M13,8.5H11V6.5H13V8.5M13,13H11V11H13V13M13,17.5H11V15.5H13V17.5M22,10V6C22,4.89 21.1,4 20,4H4A2,2 0 0,0 2,6V10C3.11,10 4,10.9 4,12A2,2 0 0,1 2,14V18A2,2 0 0,0 4,20H20A2,2 0 0,0 22,18V14A2,2 0 0,1 20,12C20,10.89 20.9,10 22,10Z"/></svg><span class="t" style="left:533px">MySQL 8.0.18</span>
<svg class="ico" style="left:642px;top:4px;width:14px;height:14px;color:#e4e4e7" viewBox="0 0 24 24"><path d="M13.5,8H12V13L16.28,15.54L17,14.33L13.5,12.25V8M13,3A9,9 0 0,0 4,12H1L4.96,16.03L9,12H6A7,7 0 0,1 13,5A7,7 0 0,1 20,12A7,7 0 0,1 13,19C11.07,19 9.32,18.21 8.06,16.94L6.64,18.36C8.27,20 10.5,21 13,21A9,9 0 0,0 22,12A9,9 0 0,0 13,3"/></svg><span class="t" style="left:664px">3 minutes ago</span>
</div>
</body>
</html>
